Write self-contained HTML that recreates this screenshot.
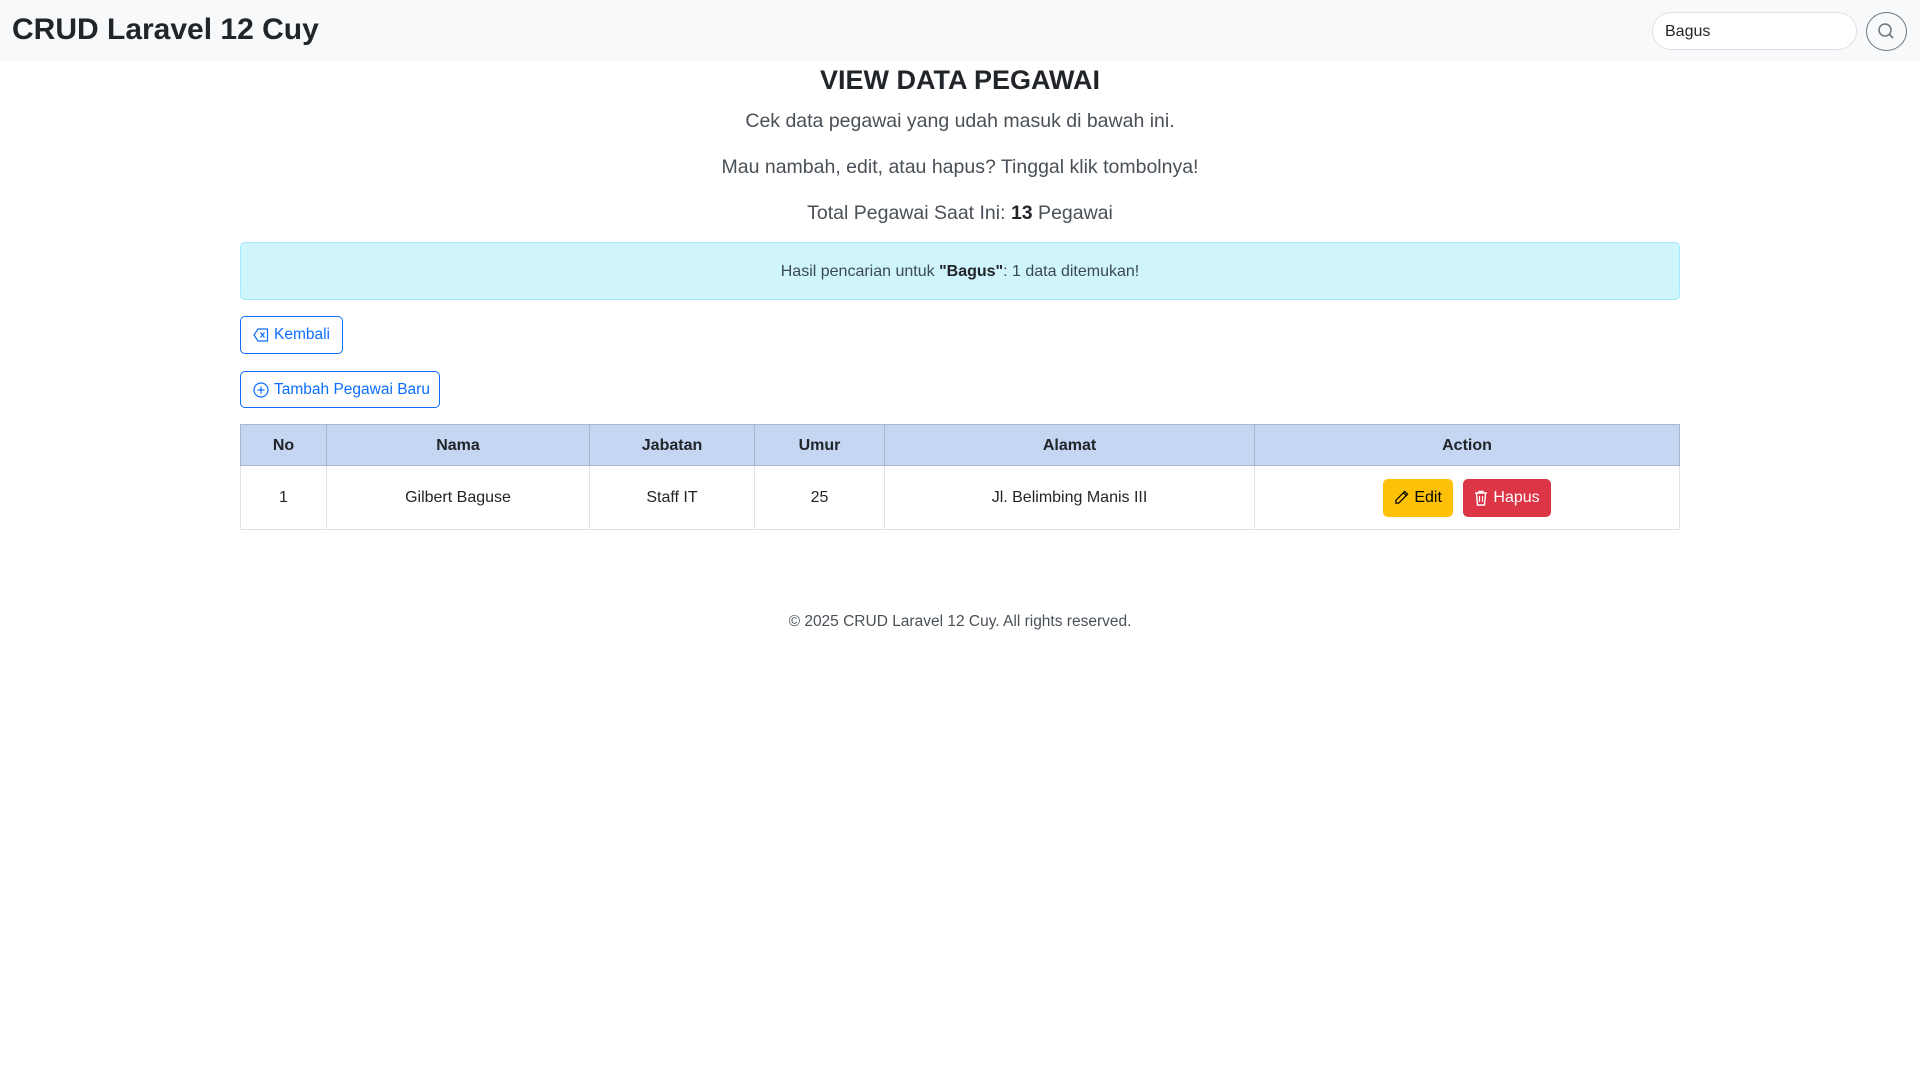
<!DOCTYPE html>
<html><head><meta charset="utf-8"><style>
*{box-sizing:border-box}
body{margin:0;font-family:"Liberation Sans",sans-serif;background:#fff;color:#212529;width:1920px;height:1080px;position:relative}
.nav{position:absolute;left:0;top:0;width:1920px;height:61px;background:#f8f9fa}
.brand{position:absolute;left:12px;top:13px;font-size:30px;font-weight:bold;color:#212529}
.search{position:absolute;left:1652px;top:12px;width:205px;height:38px;border:1px solid #dee2e6;border-radius:19px;background:#fff;font-size:16px;padding:10px 12px;color:#212529}
.sbtn{position:absolute;left:1866px;top:12px;width:41px;height:39px;border:1.5px solid #6c757d;border-radius:50%}
.c{position:absolute;left:0;width:1920px;text-align:center}
h1{margin:0;font-size:27px;font-weight:bold}
.p{font-size:19.5px;color:#495057}
.alert{position:absolute;left:240px;top:242px;width:1440px;height:58px;background:#cff4fc;border:1px solid #9eeaf9;border-radius:5px;text-align:center;font-size:16px;line-height:58px;color:#3a4a50}
.btn{position:absolute;left:240px;border:1px solid #0d6efd;border-radius:5px;color:#0d6efd;font-size:15.5px;display:flex;align-items:center;padding:0 12px;gap:5px;white-space:nowrap}
.btn svg{flex-shrink:0}
table{position:absolute;left:240px;top:424px;width:1440px;border-collapse:collapse;font-size:16px}
th{background:#c5d6f2;border:1px solid #a9b6cc;height:41px;font-weight:bold;padding-top:2px}
td{border:1px solid #dee2e6;height:64px;text-align:center}
.b2{display:inline-flex;align-items:center;gap:5px;height:38px;border-radius:5px;padding:0 11px;font-size:16px;vertical-align:middle}
</style></head><body>
<div class="nav"><div class="brand">CRUD Laravel 12 Cuy</div>
<div class="search">Bagus</div>
<div class="sbtn"><svg width="38" height="36" viewBox="0 0 38 36"><circle cx="18" cy="17" r="6" fill="none" stroke="#6c757d" stroke-width="1.5"/><line x1="22.5" y1="21.5" x2="26" y2="25" stroke="#6c757d" stroke-width="1.8"/></svg></div></div>
<div class="c" style="top:65px"><h1>VIEW DATA PEGAWAI</h1></div>
<div class="c p" style="top:110px">Cek data pegawai yang udah masuk di bawah ini.</div>
<div class="c p" style="top:156px">Mau nambah, edit, atau hapus? Tinggal klik tombolnya!</div>
<div class="c p" style="top:202px">Total Pegawai Saat Ini: <b style="color:#212529">13</b> Pegawai</div>
<div class="alert">Hasil pencarian untuk <b style="color:#212529">"Bagus"</b>: 1 data ditemukan!</div>
<div class="btn" style="top:316px;height:38px;width:103px"><svg width="16" height="14" viewBox="0 0 16 14"><path d="M5 1h9.5v12H5L1 7z" fill="none" stroke="#0d6efd" stroke-width="1.2" stroke-linejoin="round"/><path d="M7.5 4.5l4 5M11.5 4.5l-4 5" stroke="#0d6efd" stroke-width="1.2"/></svg>Kembali</div>
<div class="btn" style="top:371px;height:37px;width:200px"><svg width="16" height="16" viewBox="0 0 16 16"><circle cx="8" cy="8" r="7" fill="none" stroke="#0d6efd" stroke-width="1.2"/><path d="M8 4.5v7M4.5 8h7" stroke="#0d6efd" stroke-width="1.2"/></svg>Tambah Pegawai Baru</div>
<table><tr><th style="width:86px">No</th><th style="width:263px">Nama</th><th style="width:165px">Jabatan</th><th style="width:130px">Umur</th><th style="width:370px">Alamat</th><th>Action</th></tr>
<tr><td>1</td><td>Gilbert Baguse</td><td>Staff IT</td><td>25</td><td>Jl. Belimbing Manis III</td><td>
<span class="b2" style="background:#ffc107;color:#000"><svg width="15" height="15" viewBox="0 0 16 16"><path d="M11.5 1.5l3 3L5 14H2v-3z M10 3l3 3" fill="none" stroke="#000" stroke-width="1.3"/></svg>Edit</span>
<span class="b2" style="background:#dc3545;color:#fff;margin-left:6px"><svg width="14" height="16" viewBox="0 0 14 16"><path d="M1 3h12M5 3V1.5h4V3M2.5 3l1 12h7l1-12" fill="none" stroke="#fff" stroke-width="1.4"/><path d="M5.5 6v6M8.5 6v6" stroke="#fff" stroke-width="1.2"/></svg>Hapus</span></td></tr></table>
<div class="c" style="top:613px;font-size:15.5px;color:#495057">© 2025 CRUD Laravel 12 Cuy. All rights reserved.</div>
</body></html>
